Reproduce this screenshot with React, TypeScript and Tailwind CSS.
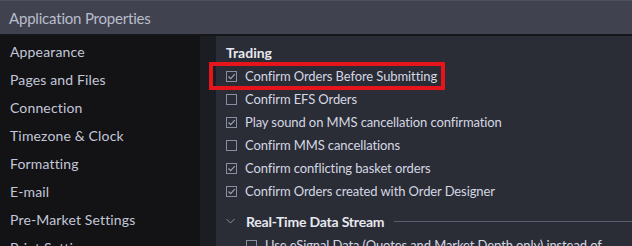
import React from "react";

const font = { fontFamily: "Lato, 'Open Sans', sans-serif" };

function Box({ checked }: { checked: boolean }) {
  return (
    <span className="w-[11px] h-[11px] border border-[#8a8ea3] bg-[#2b2d36] flex items-center justify-center shrink-0">
      {checked && (
        <svg width="9" height="9" viewBox="0 0 9 9">
          <path d="M1.5 4.5 L3.7 6.7 L7.8 2.2" stroke="#9ea2b5" strokeWidth="1.2" fill="none" />
        </svg>
      )}
    </span>
  );
}

function Row({ checked, label, highlight }: { checked: boolean; label: string; highlight?: boolean }) {
  return (
    <div className="relative h-[23px] flex items-center gap-[8px] pl-[10px]">
      {highlight && (
        <div className="absolute left-[-7px] top-[-3px] w-[236px] h-[28px] border-[4px] border-[#e8141c]" />
      )}
      <Box checked={checked} />
      <span className="text-[13px] tracking-[-0.1px] text-[#d4d7e3] whitespace-nowrap">{label}</span>
    </div>
  );
}

export default function App() {
  const side = [
    "Appearance",
    "Pages and Files",
    "Connection",
    "Timezone & Clock",
    "Formatting",
    "E-mail",
    "Pre-Market Settings",
    "Print Settings",
  ];
  return (
    <div className="w-[632px] h-[246px] overflow-hidden flex flex-col bg-[#2b2d36]" style={font}>
      <div className="h-[36px] shrink-0 bg-[#40434f] border-t border-[#4c5060] border-b-2 border-b-[#16171b] flex items-center pl-[9px] pt-[2px]">
        <span className="text-[15px] tracking-[-0.2px] text-[#b9bdcc]">Application Properties</span>
      </div>
      <div className="flex flex-1 min-h-0">
        <div className="w-[200px] bg-[#131316] pt-[1px] shrink-0">
          {side.map((s) => (
            <div key={s} className="h-[28px] flex items-center pl-[10px] text-[14px] tracking-[0.15px] text-[#c3c7d8] whitespace-nowrap">
              {s}
            </div>
          ))}
        </div>
        <div className="w-[16px] bg-[#1c1d22] shrink-0" />
        <div className="flex-1 pt-[4px]">
          <div className="h-[25px] flex items-center pl-[10px] text-[14px] font-bold text-[#e6e8f0]">Trading</div>
          <Row checked label="Confirm Orders Before Submitting" highlight />
          <Row checked={false} label="Confirm EFS Orders" />
          <Row checked label="Play sound on MMS cancellation confirmation" />
          <Row checked={false} label="Confirm MMS cancellations" />
          <Row checked label="Confirm conflicting basket orders" />
          <Row checked label="Confirm Orders created with Order Designer" />
          <div className="h-[31px] flex items-center pl-[10px] pt-[5px]">
            <svg width="9" height="6" viewBox="0 0 9 6" className="mr-[11px]">
              <path d="M0.5 1 L4.5 5 L8.5 1" stroke="#8a8ea3" strokeWidth="1" fill="none" />
            </svg>
            <span className="text-[14px] font-bold tracking-[-0.2px] text-[#e6e8f0] whitespace-nowrap">Real-Time Data Stream</span>
            <div className="flex-1 h-px bg-[#5a5d72] ml-[10px]" />
          </div>
          <div className="h-[23px] flex items-center gap-[8px] pl-[30px]">
            <Box checked={false} />
            <span className="text-[13px] tracking-[-0.1px] text-[#d4d7e3] whitespace-nowrap">Use eSignal Data (Quotes and Market Depth only) instead of</span>
          </div>
        </div>
      </div>
    </div>
  );
}
